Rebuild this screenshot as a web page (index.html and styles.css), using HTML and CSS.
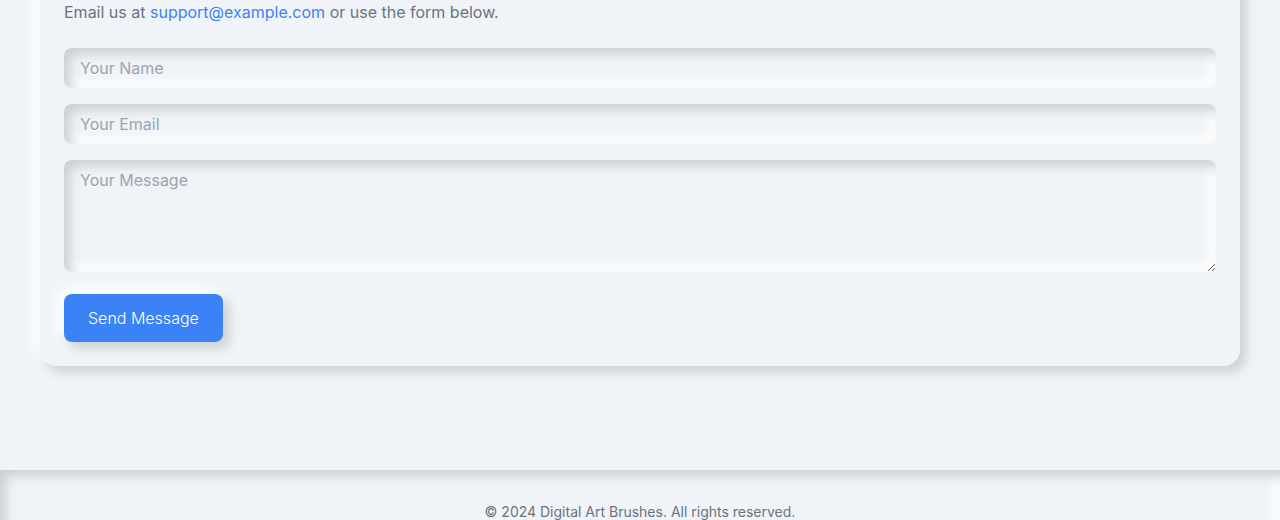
FILE: index.html
```html
<!DOCTYPE html>
<html lang="en">
<head>
<meta charset="utf-8">
<title>Digital Art Brushes</title>
<link rel="stylesheet" href="styles.css">
</head>
<body>
<main class="main">
  <section class="card">
    <p class="intro">Email us at <a class="link" href="mailto:support@example.com">support@example.com</a> or use the form below.</p>
    <form class="form">
      <input class="field" type="text" placeholder="Your Name" aria-label="Your Name">
      <input class="field" type="email" placeholder="Your Email" aria-label="Your Email">
      <textarea class="field" rows="4" placeholder="Your Message" aria-label="Your Message"></textarea>
      <div class="actions"><button class="send" type="submit">Send Message</button></div>
    </form>
  </section>
</main>
<footer class="footer">
  <p class="copyright">© 2024 Digital Art Brushes. All rights reserved.</p>
</footer>
</body>
</html>
```
FILE: styles.css
```css
* {
  box-sizing: border-box;
}

html {
  overflow-x: hidden;
  scrollbar-width: none;
}

body {
  margin: 0;
  background: #f0f4f8;
  color: #6b7280;
  font: 16px/24px Inter, sans-serif;
}

p {
  margin: 0;
}

.main {
  padding: 0 40px 104px;
}

.card {
  margin-top: -32px;
  padding: 32px 24px 24px;
  border-radius: 16px;
  background: #f0f4f8;
  box-shadow: 6px 6px 12px #cccfcf, -6px -6px 12px #ffffff;
}

.link {
  color: #3b82f6;
  text-decoration: none;
}

.form {
  display: flex;
  flex-direction: column;
  gap: 16px;
  padding-top: 24px;
}

.field {
  display: block;
  width: 100%;
  margin: 0;
  padding: 8px 16px;
  border: 0;
  border-radius: 8px;
  background: #f0f4f8;
  box-shadow: inset 6px 6px 12px #cccfcf, inset -6px -6px 12px #ffffff;
  color: #374151;
  font: inherit;
}

.field::placeholder {
  color: #9ca3af;
  opacity: 1;
}

.actions {
  padding-top: 6px;
}

.send {
  display: block;
  padding: 12px 24px;
  border: 0;
  border-radius: 8px;
  background: #3b82f6;
  box-shadow: 6px 6px 12px #cccfcf, -6px -6px 12px #ffffff;
  color: #ffffff;
  font: inherit;
  font-weight: 300;
}

.footer {
  padding: 32px 24px;
  box-shadow: inset 6px 6px 12px #cccfcf, inset -6px -6px 12px #ffffff;
  font-size: 14px;
  line-height: 20px;
  text-align: center;
}
```
